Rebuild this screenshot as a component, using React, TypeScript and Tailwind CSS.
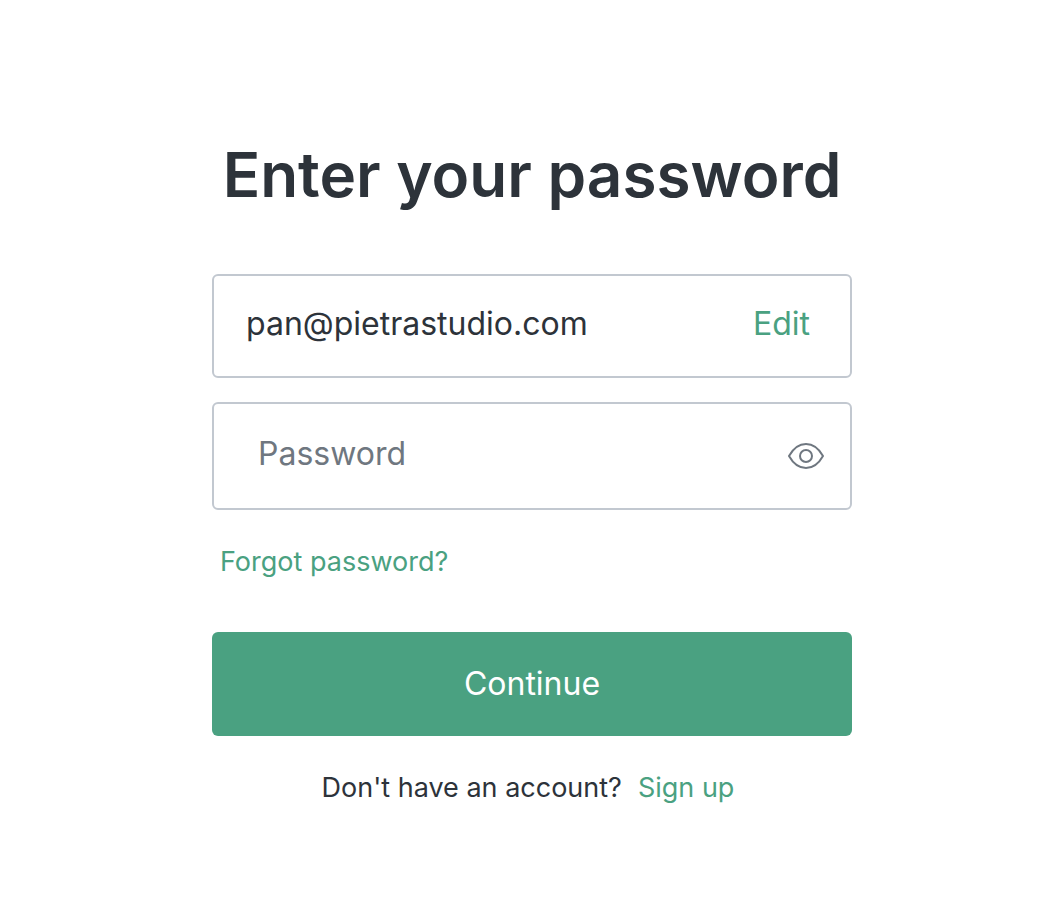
export default function App() {
  return (
    <main className="flex min-h-screen flex-col items-center bg-white pt-34 pr-6 pb-10 pl-11 font-['Inter',sans-serif] text-[#2d333a]">
      <h1 className="text-center text-[62px] leading-[78px] font-semibold">Enter your password</h1>
      <form className="mt-15 w-full max-w-160" onSubmit={(e) => e.preventDefault()}>
        <div className="flex h-26 items-center justify-between rounded-md border-2 border-[#c2c8d0] pr-10 pb-1 pl-8">
          <input aria-label="Email address" readOnly defaultValue="pan@pietrastudio.com" className="min-w-0 flex-1 bg-transparent text-[32px] leading-10 outline-none" />
          <a href="#edit" className="text-[32px] leading-10 text-[#4aa181]">Edit</a>
        </div>
        <div className="mt-6 flex h-27 items-center justify-between rounded-md border-2 border-[#c2c8d0] pr-6 pl-11">
          <input type="password" aria-label="Password" placeholder="Password" className="min-w-0 flex-1 bg-transparent pb-1 text-[32px] leading-10 outline-none placeholder:text-[#6f7780]" />
          <button type="button" aria-label="Show password">
            <svg width="40" height="32" viewBox="0 0 40 32" fill="none" stroke="#6f7780" strokeWidth="2" strokeLinejoin="round">
              <path d="M3 16C7.5 8 13 4 20 4s12.500 4 17 12c-4.500 8-10 12-17 12S7.500 24 3 16Z" />
              <circle cx="20" cy="16" r="6" />
            </svg>
          </button>
        </div>
        <a href="#forgot" className="mt-8 ml-2 block w-fit text-[27px] leading-10 text-[#4aa181]">Forgot password?</a>
        <button type="submit" className="mt-[50px] h-26 w-full rounded-md bg-[#4aa181] text-[32px] leading-10 text-white">Continue</button>
      </form>
      <p className="mt-8 flex gap-4 pr-2 text-[27px] leading-10">
        <span>Don't have an account?</span>
        <a href="#signup" className="text-[#4aa181]">Sign up</a>
      </p>
    </main>
  );
}
